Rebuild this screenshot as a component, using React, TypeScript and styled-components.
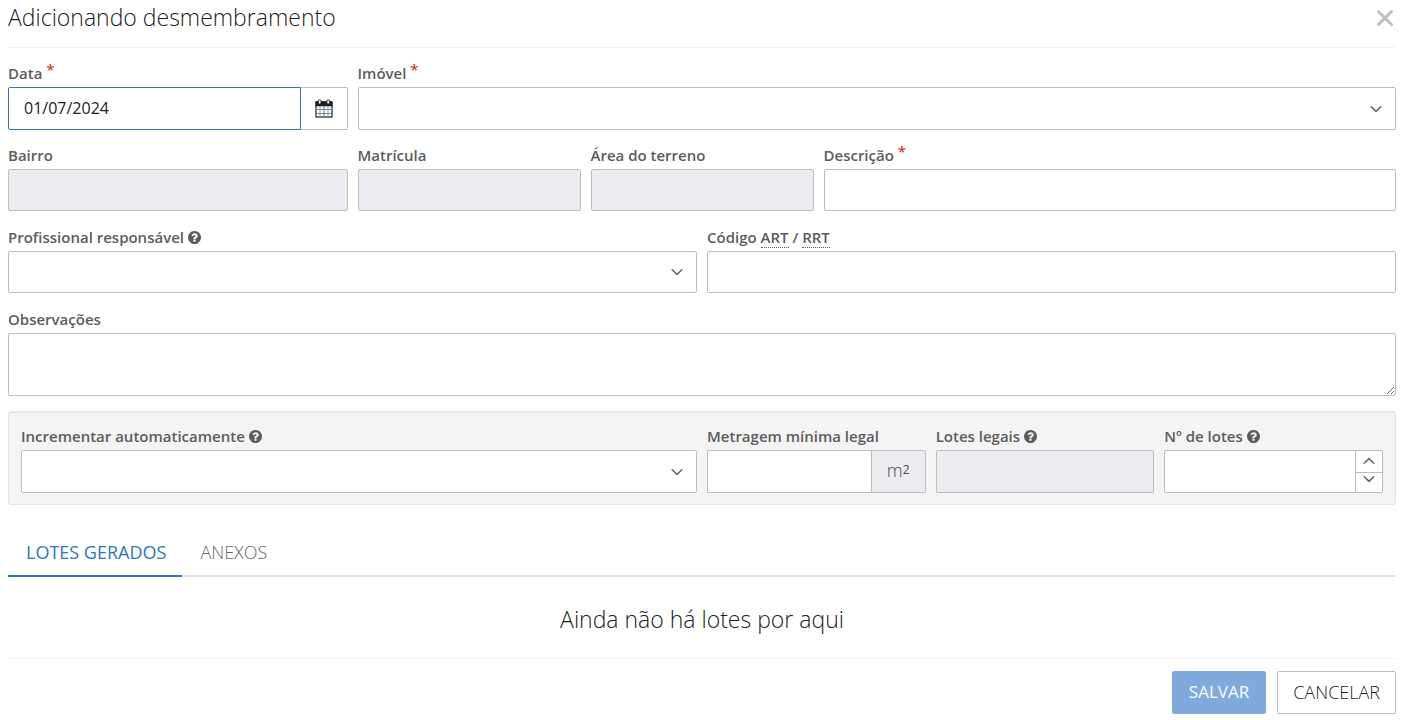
import React from "react";
import styled, { createGlobalStyle, css } from "styled-components";

const colors = {
  text: "#1c1c1c",
  label: "#5c5c5c",
  muted: "#666",
  border: "#bdbdbd",
  line: "#f4f4f6",
  disabled: "#ebecf0",
  primary: "#3074c4",
  danger: "#e0383e",
};

const GlobalStyle = createGlobalStyle`
  *, *::before, *::after { box-sizing: border-box; }
  body {
    margin: 0;
    background: #fff;
    color: ${colors.text};
    font-family: "Open Sans", "Noto Sans", sans-serif;
    font-size: 16px;
  }
`;

const Page = styled.main`
  padding: 0 14px 6px 8px;
`;

const Header = styled.header`
  display: flex;
  align-items: center;
  justify-content: space-between;
  height: 48px;
  padding-bottom: 12px;
  border-bottom: 1px solid ${colors.line};
  margin-bottom: 15px;
`;

const Title = styled.h1`
  margin: 0;
  padding-bottom: 2px;
  font-size: 23px;
  line-height: 32px;
  font-weight: 300;
`;

const CloseButton = styled.button`
  display: flex;
  padding: 0 2px;
  border: 0;
  background: none;
  cursor: pointer;
`;

const Row = styled.div`
  display: grid;
  grid-template-columns: repeat(12, minmax(0, 1fr));
  column-gap: 10px;
  min-height: 67px;
  margin-bottom: 15px;
`;

const Field = styled.div<{ $span: number }>`
  grid-column: span ${(p) => p.$span};
`;

const Label = styled.label`
  display: block;
  height: 24px;
  font-size: 15px;
  line-height: 21px;
  font-weight: 600;
  color: ${colors.label};
  white-space: nowrap;
`;

const Required = styled.span`
  color: ${colors.danger};
  line-height: 0;
  vertical-align: 4px;
`;

const Abbr = styled.abbr`
  text-decoration: none;
  border-bottom: 1px dotted ${colors.label};
`;

const control = css`
  display: block;
  width: 100%;
  min-width: 0;
  margin: 0;
  padding: 0 15px;
  border: 1px solid ${colors.border};
  border-radius: 2px;
  outline: 0;
  background: #fff;
  color: ${colors.text};
  font-family: inherit;
  font-size: 16px;
`;

type Size = { $tall?: boolean };

const Input = styled.input<Size>`
  ${control}
  height: ${(p) => (p.$tall ? 43 : 42)}px;
  &:disabled { background: ${colors.disabled}; }
`;

const DateInput = styled(Input)`
  flex: 1;
  padding-bottom: 2px;
  border-color: ${colors.primary};
  border-radius: 2px 0 0 2px;
`;

const JoinedInput = styled(Input)`
  flex: 1;
  border-right: 0;
  border-radius: 2px 0 0 2px;
`;

const TextArea = styled.textarea`
  ${control}
  height: 63px;
  padding: 8px 15px;
  resize: vertical;
`;

const SelectBox = styled.div`
  display: grid;
  align-items: center;
  & > * { grid-area: 1 / 1; }
  & > svg { justify-self: end; margin-right: 13px; pointer-events: none; }
`;

const Select = styled.select<Size>`
  ${control}
  height: ${(p) => (p.$tall ? 43 : 42)}px;
  appearance: none;
`;

const Group = styled.div`
  display: flex;
  height: 43px;
`;

const CalendarButton = styled.button`
  display: flex;
  align-items: center;
  justify-content: center;
  width: 47px;
  padding: 0;
  border: 1px solid ${colors.border};
  border-left: 0;
  border-radius: 0 2px 2px 0;
  background: #fff;
  cursor: pointer;
`;

const Addon = styled.span`
  display: flex;
  align-items: center;
  justify-content: center;
  width: 55px;
  padding-bottom: 4px;
  border: 1px solid ${colors.border};
  border-radius: 0 2px 2px 0;
  background: ${colors.disabled};
  color: #4a4a4a;
  font-size: 18px;
  font-weight: 300;
  & > sup { font-size: 12px; font-weight: 400; line-height: 0; }
`;

const Stepper = styled.div`
  display: grid;
  grid-template-rows: 21px 1fr;
  width: 28px;
  border: 1px solid ${colors.border};
  border-radius: 0 2px 2px 0;
  background: #fff;
`;

const StepButton = styled.button`
  display: flex;
  align-items: center;
  justify-content: center;
  padding: 0 0 2px;
  border: 0;
  background: none;
  cursor: pointer;
  & + & { border-top: 1px solid ${colors.border}; padding-bottom: 8px; }
`;

const Panel = styled.section`
  padding: 14px 12px 11px;
  border: 1px solid #e3e3e3;
  border-radius: 3px;
  background: #f4f4f4;
  box-shadow: inset 0 1px 1px rgba(0, 0, 0, 0.05);
  margin-bottom: 23px;
  & > ${Row} { margin-bottom: 0; }
`;

const Tabs = styled.nav`
  display: flex;
  height: 49px;
  border-bottom: 2px solid #e1e2e7;
`;

const Tab = styled.button<{ $active?: boolean }>`
  height: 49px;
  padding: 0 16px 0 18px;
  border: 0;
  border-bottom: 2px solid ${(p) => (p.$active ? colors.primary : "transparent")};
  background: none;
  color: ${(p) => (p.$active ? colors.primary : colors.muted)};
  font-family: inherit;
  font-size: 18px;
  font-weight: ${(p) => (p.$active ? 500 : 300)};
  cursor: pointer;
`;

const Empty = styled.h2`
  margin: 0;
  padding: 26px 0 23px;
  border-bottom: 1px solid ${colors.line};
  font-size: 23px;
  line-height: 32px;
  font-weight: 300;
  text-align: center;
`;

const Footer = styled.footer`
  display: flex;
  justify-content: flex-end;
  gap: 11px;
  padding-top: 12px;
`;

const Button = styled.button<{ $primary?: boolean }>`
  height: 43px;
  padding: 0 ${(p) => (p.$primary ? 16 : 15)}px 2px;
  border: 1px solid ${(p) => (p.$primary ? "#80aadc" : colors.border)};
  border-radius: 2px;
  background: ${(p) => (p.$primary ? "#80aadc" : "#fff")};
  color: ${(p) => (p.$primary ? "#fff" : colors.text)};
  font-family: inherit;
  font-size: ${(p) => (p.$primary ? 17 : 18)}px;
  font-weight: ${(p) => (p.$primary ? 400 : 300)};
`;

const HelpSvg = styled.svg`
  vertical-align: -1px;
`;

const Help = () => (
  <HelpSvg width="13" height="13" viewBox="128 128 1536 1536" fill={colors.label} aria-hidden="true">
    <path d="M1024 1376v-192q0-14-9-23t-23-9h-192q-14 0-23 9t-9 23v192q0 14 9 23t23 9h192q14 0 23-9t9-23zm256-672q0-88-55.5-163t-138.5-116-170-41q-243 0-371 213-15 24 8 42l132 100q7 6 19 6 16 0 25-12 53-68 86-92 34-24 86-24 48 0 85.5 26t37.5 59q0 38-20 61t-68 45q-63 28-115.5 86.5t-52.5 125.5v36q0 14 9 23t23 9h192q14 0 23-9t9-23q0-19 21.5-49.5t54.5-49.5q32-18 49-28.5t46-35 44.5-48 28-60.5 12.5-81zm384 192q0 209-103 385.5t-279.5 279.5-385.5 103-385.5-103-279.5-279.5-103-385.5 103-385.5 279.5-279.5 385.5-103 385.5 103 279.5 279.5 103 385.5z" />
  </HelpSvg>
);

const Chevron = ({ up }: { up?: boolean }) => (
  <svg width="14" height="8" viewBox="0 0 14 8" fill="none" stroke="#666" strokeWidth="1.5" strokeLinecap="round" strokeLinejoin="round" aria-hidden="true">
    <path d={up ? "M2.2 6.3 7 1.6l4.8 4.7" : "M2.2 1.7 7 6.4l4.8-4.7"} />
  </svg>
);

const CloseIcon = () => (
  <svg width="18" height="18" viewBox="0 0 18 18" stroke="#bfbfbf" strokeWidth="3" strokeLinecap="round" aria-hidden="true">
    <path d="M2.5 2.5l13 13M15.5 2.5l-13 13" />
  </svg>
);

const CalendarIcon = () => (
  <svg width="18" height="19" viewBox="0 0 18 19" aria-hidden="true">
    <rect x="1" y="3" width="16" height="15" fill="#fff" stroke="#222" strokeWidth="1.2" />
    <path d="M0.5 3q0-.8.8-.8h15.4q.8 0 .8.8v4.2H.5z" fill="#1f1f1f" />
    <path d="M1 10.5h16M1 14.5h16" stroke="#666" strokeWidth="0.8" />
    <path d="M9 7v11" stroke="#666" strokeWidth="0.9" />
    <path d="M5 7v11M13 7v11" stroke="#4da6d8" strokeWidth="0.9" />
    <g fill="#fff" stroke="#222" strokeWidth="0.9">
      <rect x="3.4" y="0.8" width="2.6" height="4.2" rx="1.2" />
      <rect x="11.9" y="0.8" width="2.6" height="4.2" rx="1.2" />
    </g>
  </svg>
);

type SelectFieldProps = { id: string; span: number; tall?: boolean; label: React.ReactNode };

const SelectField = ({ id, span, tall, label }: SelectFieldProps) => (
  <Field $span={span}>
    <Label htmlFor={id}>{label}</Label>
    <SelectBox>
      <Select id={id} $tall={tall} defaultValue="">
        <option value="" />
      </Select>
      <Chevron />
    </SelectBox>
  </Field>
);

type TextFieldProps = SelectFieldProps & { disabled?: boolean };

const TextField = ({ id, span, tall, label, disabled }: TextFieldProps) => (
  <Field $span={span}>
    <Label htmlFor={id}>{label}</Label>
    <Input id={id} $tall={tall} disabled={disabled} />
  </Field>
);

export default function App() {
  return (
    <>
      <GlobalStyle />
      <Page>
        <Header>
          <Title>Adicionando desmembramento</Title>
          <CloseButton type="button" aria-label="Fechar">
            <CloseIcon />
          </CloseButton>
        </Header>
        <form>
          <Row>
            <Field $span={3}>
              <Label htmlFor="data">Data <Required>*</Required></Label>
              <Group>
                <DateInput id="data" $tall defaultValue="01/07/2024" />
                <CalendarButton type="button" aria-label="Abrir calendário">
                  <CalendarIcon />
                </CalendarButton>
              </Group>
            </Field>
            <SelectField id="imovel" span={9} tall label={<>Imóvel <Required>*</Required></>} />
          </Row>
          <Row>
            <TextField id="bairro" span={3} label="Bairro" disabled />
            <TextField id="matricula" span={2} label="Matrícula" disabled />
            <TextField id="area" span={2} label="Área do terreno" disabled />
            <TextField id="descricao" span={5} label={<>Descrição <Required>*</Required></>} />
          </Row>
          <Row>
            <SelectField id="profissional" span={6} label={<>Profissional responsável <Help /></>} />
            <TextField id="codigo" span={6} label={<>Código <Abbr>ART</Abbr> / <Abbr>RRT</Abbr></>} />
          </Row>
          <Row>
            <Field $span={12}>
              <Label htmlFor="observacoes">Observações</Label>
              <TextArea id="observacoes" />
            </Field>
          </Row>
          <Panel>
            <Row>
              <SelectField id="incrementar" span={6} tall label={<>Incrementar automaticamente <Help /></>} />
              <Field $span={2}>
                <Label htmlFor="metragem">Metragem mínima legal</Label>
                <Group>
                  <JoinedInput id="metragem" $tall />
                  <Addon>m<sup>2</sup></Addon>
                </Group>
              </Field>
              <TextField id="lotes-legais" span={2} tall disabled label={<>Lotes legais <Help /></>} />
              <Field $span={2}>
                <Label htmlFor="lotes">Nº de lotes <Help /></Label>
                <Group>
                  <JoinedInput id="lotes" $tall />
                  <Stepper>
                    <StepButton type="button" aria-label="Aumentar"><Chevron up /></StepButton>
                    <StepButton type="button" aria-label="Diminuir"><Chevron /></StepButton>
                  </Stepper>
                </Group>
              </Field>
            </Row>
          </Panel>
          <Tabs>
            <Tab type="button" $active>LOTES GERADOS</Tab>
            <Tab type="button">ANEXOS</Tab>
          </Tabs>
          <Empty>Ainda não há lotes por aqui</Empty>
          <Footer>
            <Button type="button" $primary disabled>SALVAR</Button>
            <Button type="button">CANCELAR</Button>
          </Footer>
        </form>
      </Page>
    </>
  );
}
